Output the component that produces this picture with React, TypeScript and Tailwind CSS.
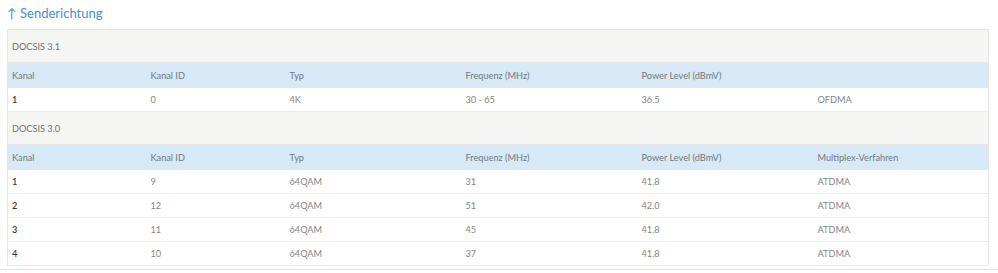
import React from "react";

type Row = string[];

const header31 = ["Kanal", "Kanal ID", "Typ", "Frequenz (MHz)", "Power Level (dBmV)", ""];
const header30 = ["Kanal", "Kanal ID", "Typ", "Frequenz (MHz)", "Power Level (dBmV)", "Multiplex-Verfahren"];

const rows31: Row[] = [["1", "0", "4K", "30 - 65", "36.5", "OFDMA"]];
const rows30: Row[] = [
  ["1", "9", "64QAM", "31", "41.8", "ATDMA"],
  ["2", "12", "64QAM", "51", "42.0", "ATDMA"],
  ["3", "11", "64QAM", "45", "41.8", "ATDMA"],
  ["4", "10", "64QAM", "37", "41.8", "ATDMA"],
];

function Section({ title, header, rows }: { title: string; header: string[]; rows: Row[] }) {
  return (
    <>
      <tr className="h-[33px] bg-[#f5f5f4] border-b border-[#e6e6e6]">
        <td colSpan={6} className="pl-[4px] pt-[2px] text-[#727272]">
          {title}
        </td>
      </tr>
      <tr className="h-[25px] bg-[#d7e8f6]">
        {header.map((h, i) => (
          <td key={i} className="pl-[4px] pt-[2px] text-[#737a80]">
            {h}
          </td>
        ))}
      </tr>
      {rows.map((r, ri) => (
        <tr key={ri} className="h-[24px] bg-white border-b border-[#ebebeb]">
          {r.map((c, i) => (
            <td key={i} className={`pl-[4px] pt-px ${i === 0 ? "text-[#3a3a3a] font-semibold" : "text-[#858585]"}`}>
              {c}
            </td>
          ))}
        </tr>
      ))}
    </>
  );
}

export default function App() {
  return (
    <div className="w-[998px] h-[273px] bg-white font-['Lato','Open_Sans',sans-serif]">
      <div className="px-[7px]">
        <div className="h-[29px] pt-[4px] text-[13px] text-[#4690d8]">↑ Senderichtung</div>
        <table className="w-[982px] table-fixed border-collapse border border-[#e6e6e6] text-[9.2px]">
          <colgroup>
            <col className="w-[139px]" />
            <col className="w-[139px]" />
            <col className="w-[176px]" />
            <col className="w-[176px]" />
            <col className="w-[176px]" />
            <col />
          </colgroup>
          <tbody>
            <Section title="DOCSIS 3.1" header={header31} rows={rows31} />
            <Section title="DOCSIS 3.0" header={header30} rows={rows30} />
          </tbody>
        </table>
      </div>
      <div className="mt-[3px] h-px bg-[#e3e3e3]" />
    </div>
  );
}
